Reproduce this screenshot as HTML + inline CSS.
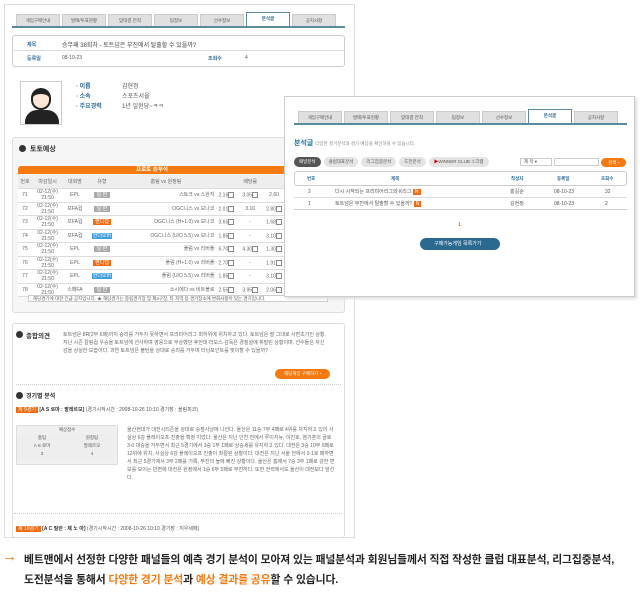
<!DOCTYPE html><html><head><meta charset="utf-8"><style>
*{margin:0;padding:0;box-sizing:border-box}
body{width:640px;height:594px;background:#fff;position:relative;overflow:hidden;font-family:"Liberation Sans","Noto Sans CJK KR",sans-serif;font-size:5px;color:#555}
.a{position:absolute}
.tabs{position:absolute;display:flex;gap:2px;border-bottom:2px solid #5a8aa0}
.tab{width:44px;height:12px;background:#e0e0e0;border:1px solid #ccc;border-bottom:none;font-size:4.5px;text-align:center;line-height:11px;color:#555;margin-top:2px}
.tab.on{background:#fff;border:1px solid #5a8aa0;border-bottom:none;height:14px;margin-top:0;color:#2a6a8a;font-weight:bold}
table{border-collapse:collapse}
td{font-size:5px;border-bottom:1px solid #ddd;text-align:center;height:13.5px;line-height:6px;color:#666}
.g{background:#aaa;color:#fff;padding:0 3px}
.o{background:#f26a10;color:#fff;padding:0 2px}
.b{background:#3a9ee0;color:#fff;padding:0 1px}
.cb{display:inline-block;width:6px;height:6px;border:1px solid #888;vertical-align:middle}
</style></head><body>
<div class="a" style="left:4px;top:4px;width:351px;height:534px;border:1px solid #ddd"></div>
<div class="tabs" style="left:12px;top:12px;width:333px;padding-left:4px"><div class="tab">게임구매안내</div><div class="tab">발매/투표현황</div><div class="tab">맞대결 전적</div><div class="tab">팀정보</div><div class="tab">선수정보</div><div class="tab on">분석글</div><div class="tab">공지사항</div></div>
<div class="a" style="left:12px;top:35px;width:333px;height:32px;border:1px solid #ccc;border-radius:3px"></div>
<div class="a" style="left:27px;top:41px;color:#2a6a9a;font-weight:bold">제목</div>
<div class="a" style="left:62px;top:40px;font-size:6px;color:#444">승무패 38회차 - 토트넘은 부진에서 탈출할 수 있을까?</div>
<div class="a" style="left:14px;top:50px;width:330px;border-top:1px solid #ddd"></div>
<div class="a" style="left:27px;top:55px;color:#2a6a9a;font-weight:bold">등록일</div>
<div class="a" style="left:62px;top:55px">08-10-23</div>
<div class="a" style="left:208px;top:55px;color:#2a6a9a;font-weight:bold">조회수</div>
<div class="a" style="left:245px;top:55px">4</div>
<div class="a" style="left:20px;top:81px;width:42px;height:44px;border:1px solid #ccc;background:#fff"><div class="a" style="left:10px;top:6px;width:20px;height:22px;border-radius:10px;background:#fde6d6;border:2px solid #222;border-top-width:6px"></div><div class="a" style="left:4px;top:28px;width:34px;height:14px;background:#222;border-radius:12px 12px 0 0"></div></div>
<div class="a" style="left:76px;top:82px;font-size:6px;line-height:10px;color:#2a6a9a;font-weight:bold">· 이름<br>· 소속<br>· 주요경력</div>
<div class="a" style="left:122px;top:82px;font-size:6px;line-height:10px">김현정<br>스포츠서울<br>1년 일현당~ㅋㅋ</div>
<div class="a" style="left:12px;top:137px;width:333px;height:176px;border:1px solid #ddd;background:#f6f6f6;border-radius:3px"></div>
<div class="a" style="left:19px;top:145px;width:7px;height:7px;border-radius:50%;background:#333"></div>
<div class="a" style="left:30px;top:144px;font-size:7px;font-weight:bold;color:#333">토토예상</div>
<div class="a" style="left:18px;top:166px;width:268px;height:8px;background:#f47a10;color:#fff;font-size:5.5px;text-align:center;line-height:8px;font-weight:bold;border-radius:3px 0 0 0">프로토 승부식</div>
<table class="a" style="left:18px;top:175px;width:268px;background:#fff">
<tr style="background:#eee"><td style="height:7px">번호</td><td>마감일시</td><td>대회명</td><td>유형</td><td>홈팀 vs 원정팀</td><td colspan=3>배당률</td></tr>
<tr><td>71</td><td>02-12(수)<br>21:50</td><td>EPL</td><td><span class="g">일 반</span></td><td style="text-align:right">스토크 vs 스완지</td><td>2.16<span class="cb"></span></td><td>3.05<span class="cb"></span></td><td>2.60</td></tr>
<tr><td>72</td><td>02-12(수)<br>21:50</td><td>프FA컵</td><td><span class="g">일 반</span></td><td style="text-align:right">OGC니스 vs 모나코</td><td>2.01<span class="cb"></span></td><td>3.10</td><td>2.80<span class="cb"></span></td></tr>
<tr><td>73</td><td>02-12(수)<br>21:50</td><td>프FA컵</td><td><span class="o">핸디캡</span></td><td style="text-align:right">OGC니스 (H+1.0) vs 모나코</td><td>3.65<span class="cb"></span></td><td>-</td><td>1.68<span class="cb"></span></td></tr>
<tr><td>74</td><td>02-12(수)<br>21:50</td><td>프FA컵</td><td><span class="b">언더오버</span></td><td style="text-align:right">OGC니스 (U/O 5.5) vs 모나코</td><td>1.85<span class="cb"></span></td><td>-</td><td>3.10<span class="cb"></span></td></tr>
<tr><td>75</td><td>02-12(수)<br>21:50</td><td>EPL</td><td><span class="g">일 반</span></td><td style="text-align:right">풀럼 vs 리버풀</td><td>5.70<span class="cb"></span></td><td>4.30<span class="cb"></span></td><td>1.30<span class="cb"></span></td></tr>
<tr><td>76</td><td>02-12(수)<br>21:50</td><td>EPL</td><td><span class="o">핸디캡</span></td><td style="text-align:right">풀럼 (H+1.0) vs 리버풀</td><td>2.70<span class="cb"></span></td><td>-</td><td>1.91<span class="cb"></span></td></tr>
<tr><td>77</td><td>02-12(수)<br>21:50</td><td>EPL</td><td><span class="b">언더오버</span></td><td style="text-align:right">풀럼 (U/O 5.5) vs 리버풀</td><td>1.85<span class="cb"></span></td><td>-</td><td>3.10<span class="cb"></span></td></tr>
<tr><td>78</td><td>02-12(수)<br>21:50</td><td>스페FA</td><td><span class="g">일 반</span></td><td style="text-align:right">소시에다 vs 비트블로</td><td>2.55<span class="cb"></span></td><td>3.95<span class="cb"></span></td><td>2.06<span class="cb"></span></td></tr>
</table>
<div class="a" style="left:28px;top:295px;width:300px;height:7px;border:1px solid #ccc;background:#fff;font-size:4.5px;line-height:5px;padding-left:4px">해당경기에 대한 긴급 공지입니다. ★ 해당경기는 중립경기장 및 제3구장, 타 지역 등 경기장소에 변화사항이 있는 경기입니다.</div>
<div class="a" style="left:12px;top:323px;width:333px;height:215px;border:1px solid #ddd;border-radius:3px"></div>
<div class="a" style="left:16px;top:331px;width:7px;height:7px;border-radius:50%;background:#333"></div>
<div class="a" style="left:26px;top:330px;font-size:6.5px;font-weight:bold;color:#333">종합의견</div>
<div class="a" style="left:63px;top:331px;width:265px;font-size:5px;line-height:8px;color:#666">토트넘은 8R(2무 6패)까지 승리를 거두지 못하면서 프리미어리그 최하위에 위치하고 있다. 토트넘은 말 그대로 사면초가인 상황. 지난 시즌 칼링컵 우승을 토트넘에 선사하며 영웅으로 부상했던 후안데 라모스 감독은 경질설에 휘말린 상황이며, 선수들은 자신감을 상실한 모습이다. 과연 토트넘은 볼턴을 상대로 승리를 거두며 터닝포인트를 맞이할 수 있을까?</div>
<div class="a" style="left:275px;top:369px;width:55px;height:10px;background:#f47a10;border-radius:5px;color:#fff;font-size:4.5px;text-align:center;line-height:10px">해당게임 구매하기 ›</div>
<div class="a" style="left:16px;top:384px;width:325px;border-top:1px dotted #ccc"></div>
<div class="a" style="left:16px;top:392px;width:7px;height:7px;border-radius:50%;background:#333"></div>
<div class="a" style="left:26px;top:391px;font-size:6px;font-weight:bold;color:#333">경기별 분석</div>
<div class="a" style="left:16px;top:406px;font-size:5px"><span class="o">제 9경기</span> <b style="color:#333">[A S 로마 : 팔레르모]</b> (경기시작시간 : 2008-10-26 10:10 경기장 : 올림피코)</div>
<div class="a" style="left:16px;top:425px;width:102px;height:40px;border:1px solid #ddd;background:#f0f0f0;font-size:4.5px;text-align:center;line-height:8px">예상점수<div style="display:flex;background:#fff"><div style="flex:1;background:#eee">홈팀<br>A S 로마<br>3</div><div style="flex:1;background:#eee">원정팀<br>팔레르모<br>4</div></div></div>
<div class="a" style="left:127px;top:426px;width:210px;font-size:5px;line-height:8px;color:#666">울산현대가 대전시티즌을 상대로 승점사냥에 나선다. 울산은 11승 7무 4패로 4위를 차지하고 있어 사실상 6강 플레이오프 진출을 확정 지었다. 울산은 지난 인천 전에서 루이지뉴, 이진호, 염기훈의 골로 3-0 대승을 거두면서 최근 5경기에서 3승 1무 1패로 상승세를 유지하고 있다. 대전은 3승 10무 9패로 12위에 위치, 사실상 6강 플레이오프 진출이 좌절된 상황이다. 대전은 지난 서울 전에서 0-1로 패하면서 최근 5경기에서 3무 2패를 기록, 부진의 늪에 빠진 상황이다. 울산은 홈에서 7승 3무 1패로 강한 면모를 보이는 반면에 대전은 원정에서 1승 6무 5패로 부진하다. 또한 전력에서도 울산이 대전보다 앞선다.</div>
<div class="a" style="left:14px;top:513px;width:328px;border-top:1px dotted #ccc"></div>
<div class="a" style="left:16px;top:525px;font-size:5px"><span class="o">제 10경기</span> <b style="color:#333">[A C 밀란 : 제 노 아]</b> (경기시작시간 : 2008-10-26 10:10 경기장 : 지우세페)</div>

<div class="a" style="left:284px;top:96px;width:351px;height:201px;border:1px solid #ccc;background:#fff;box-shadow:2px 2px 3px #ddd"></div>
<div class="tabs" style="left:294px;top:109px;width:333px;padding-left:4px"><div class="tab">게임구매안내</div><div class="tab">발매/투표현황</div><div class="tab">맞대결 전적</div><div class="tab">팀정보</div><div class="tab">선수정보</div><div class="tab on">분석글</div><div class="tab">공지사항</div></div>
<div class="a" style="left:294px;top:138px;font-size:7px;font-weight:bold;color:#2a7aaa">분석글 <span style="font-size:4.5px;font-weight:normal;color:#888">다양한 경기분석과 경기 예상을 확인하실 수 있습니다.</span></div>
<div class="a" style="left:294px;top:157px;display:flex;gap:3px;font-size:4.5px"><span style="background:#555;color:#fff;border-radius:5px;padding:2px 5px">패널분석</span><span style="background:#e4e4e4;border-radius:5px;padding:2px 5px">클럽대표분석</span><span style="background:#e4e4e4;border-radius:5px;padding:2px 5px">리그집중분석</span><span style="background:#e4e4e4;border-radius:5px;padding:2px 5px">도전분석</span><span style="background:#e4e4e4;border-radius:5px;padding:2px 5px"><b style="color:#d00">▶</b>WINNER CLUB 스크랩</span></div>
<div class="a" style="left:520px;top:158px;width:32px;height:8px;border:1px solid #ccc;font-size:4.5px;padding-left:3px">제 목 ▾</div>
<div class="a" style="left:554px;top:158px;width:45px;height:8px;border:1px solid #ccc"></div>
<div class="a" style="left:601px;top:158px;width:25px;height:9px;background:#f47a10;border-radius:5px;color:#fff;font-size:4.5px;text-align:center;line-height:9px">검색 ›</div>
<div class="a" style="left:294px;top:171px;width:333px;height:15px;border:1px solid #ccc;border-radius:3px;font-size:4.5px;color:#2a6a9a;font-weight:bold;line-height:13px"><span class="a" style="left:12px">번호</span><span class="a" style="left:96px">제목</span><span class="a" style="left:216px">작성자</span><span class="a" style="left:262px">등록일</span><span class="a" style="left:306px">조회수</span></div>
<div class="a" style="left:294px;top:186px;width:333px;height:12px;border-bottom:1px solid #ddd;font-size:5px;line-height:12px"><span class="a" style="left:14px">2</span><span class="a" style="left:41px">다시 시작되는 프리미어리그와 K리그 <span class="o">N</span></span><span class="a" style="left:216px">홍길순</span><span class="a" style="left:260px">08-10-23</span><span class="a" style="left:311px">32</span></div>
<div class="a" style="left:294px;top:198px;width:333px;height:12px;border-bottom:1px solid #ccc;font-size:5px;line-height:12px"><span class="a" style="left:14px">1</span><span class="a" style="left:41px">토트넘은 부진에서 탈출할 수 있을까? <span class="o">N</span></span><span class="a" style="left:216px">김현정</span><span class="a" style="left:260px">08-10-23</span><span class="a" style="left:311px">2</span></div>
<div class="a" style="left:458px;top:222px;font-size:5px;color:#f47a10;font-weight:bold">1</div>
<div class="a" style="left:420px;top:238px;width:80px;height:12px;background:#2a6a90;border-radius:6px;color:#fff;font-size:5px;line-height:12px;padding-left:14px">구매가능게임 목록가기</div>

<div class="a" style="left:2px;top:548px;color:#f47a10;font-size:15px;font-weight:bold">→</div>
<div class="a" style="left:24px;top:550px;font-size:10.8px;font-weight:bold;color:#222;line-height:20px;white-space:nowrap;letter-spacing:-0.1px">베트맨에서 선정한 다양한 패널들의 예측 경기 분석이 모아져 있는 패널분석과 회원님들께서 직접 작성한 클럽 대표분석, 리그집중분석,<br>도전분석을 통해서 <span style="color:#f47a10">다양한 경기 분석</span>과 <span style="color:#f47a10">예상 결과를 공유</span>할 수 있습니다.</div>
</body></html>
